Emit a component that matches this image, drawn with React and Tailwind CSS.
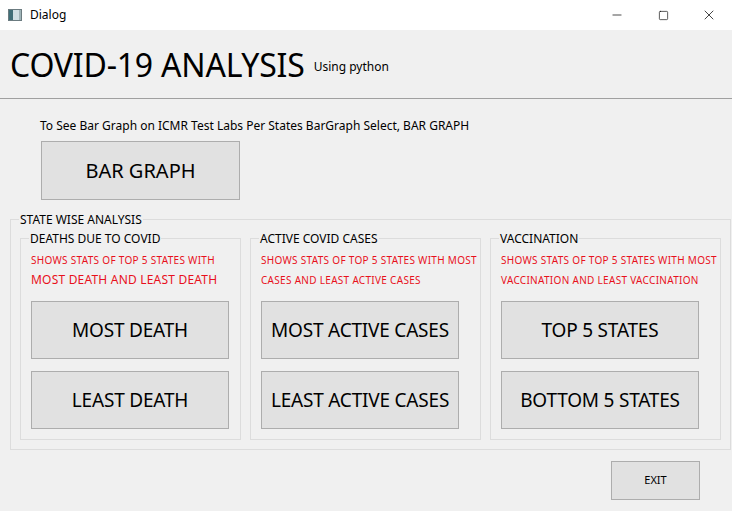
import { Minus, Square, X } from 'lucide-react';

const font = { fontFamily: '"Noto Sans", "Open Sans", sans-serif' };

function Btn({ children, className = '' }) {
    return (
        <button className={`bg-[#e1e1e1] border border-[#adadad] text-black flex items-center justify-center whitespace-nowrap ${className}`}>
            {children}
        </button>
    );
}

function Group({ title, lines, buttons, width }) {
    return (
        <div className={`relative ${width} h-[202px] border border-[#dcdcdc] pl-[10px] pt-[11px]`}>
            <span className="absolute -top-[8px] left-[8px] bg-[#f0f0f0] px-[1px] text-[12px] leading-[15px] text-black">{title}</span>
            <div className="h-[51px] flex flex-col text-[#e8101c]">
                {lines.map((l, i) => (
                    <div key={i} className={`h-[20px] flex items-center whitespace-nowrap ${l.big ? 'text-[12px] tracking-[0.2px]' : 'text-[10px] tracking-[0.3px]'}`}>{l.text}</div>
                ))}
            </div>
            <div className="flex flex-col gap-[12px]">
                {buttons.map((b) => (
                    <Btn key={b} className="w-[198px] h-[58px] text-[19px] tracking-[-0.2px]">{b}</Btn>
                ))}
            </div>
        </div>
    );
}

export default function App() {
    return (
        <div className="w-[732px] h-[511px] bg-[#f0f0f0] overflow-hidden text-black" style={font}>
            {/* title bar */}
            <div className="h-[30px] bg-white flex items-center">
                <div className="ml-[8px] w-[14px] h-[12px] border border-[#6b7b80] bg-[#cfe0e4] flex">
                    <div className="w-[4px] h-full bg-[#3f6f78]" />
                    <div className="flex-1" />
                    <div className="w-[2px] h-full bg-[#9fb4b8]" />
                </div>
                <span className="ml-[8px] text-[12px]">Dialog</span>
                <div className="ml-auto flex h-full">
                    <div className="w-[46px] flex items-center justify-center"><Minus size={14} strokeWidth={1.2} /></div>
                    <div className="w-[46px] flex items-center justify-center"><Square size={11} strokeWidth={1.4} /></div>
                    <div className="w-[46px] flex items-center justify-center"><X size={16} strokeWidth={1.1} /></div>
                </div>
            </div>

            {/* header */}
            <div className="h-[69px] flex items-end pl-[10px] pb-[13px] border-b border-[#a0a0a0]">
                <h1 className="text-[32px] leading-[40px] tracking-[-0.2px]">COVID-19 ANALYSIS</h1>
                <span className="ml-[9px] mb-[9px] text-[12px]">Using python</span>
            </div>

            <div className="pl-[40px] pt-[19px] text-[12px] leading-[16px]">
                To See Bar Graph on ICMR Test Labs Per States BarGraph Select, BAR GRAPH
            </div>
            <Btn className="ml-[41px] mt-[7px] w-[199px] h-[59px] text-[20px]">BAR GRAPH</Btn>

            {/* state wise group */}
            <div className="relative ml-[10px] mt-[19px] w-[721px] h-[231px] border border-[#dcdcdc] pl-[9px] pt-[18px] flex gap-[9px]">
                <span className="absolute -top-[8px] left-[8px] bg-[#f0f0f0] px-[1px] text-[12px] leading-[15px]">STATE WISE ANALYSIS</span>
                <Group
                    width="w-[221px]"
                    title="DEATHS DUE TO COVID"
                    lines={[{ text: 'SHOWS STATS OF TOP 5 STATES WITH' }, { text: 'MOST DEATH AND LEAST DEATH', big: true }]}
                    buttons={['MOST DEATH', 'LEAST DEATH']}
                />
                <Group
                    width="w-[231px]"
                    title="ACTIVE COVID CASES"
                    lines={[{ text: 'SHOWS STATS OF TOP 5 STATES WITH MOST' }, { text: 'CASES AND LEAST ACTIVE CASES' }]}
                    buttons={['MOST ACTIVE CASES', 'LEAST ACTIVE CASES']}
                />
                <Group
                    width="w-[231px]"
                    title="VACCINATION"
                    lines={[{ text: 'SHOWS STATS OF TOP 5 STATES WITH MOST' }, { text: 'VACCINATION AND LEAST VACCINATION' }]}
                    buttons={['TOP 5 STATES', 'BOTTOM 5 STATES']}
                />
            </div>

            <div className="flex justify-end pr-[32px] mt-[11px]">
                <Btn className="w-[89px] h-[39px] text-[11px]">EXIT</Btn>
            </div>
        </div>
    );
}
